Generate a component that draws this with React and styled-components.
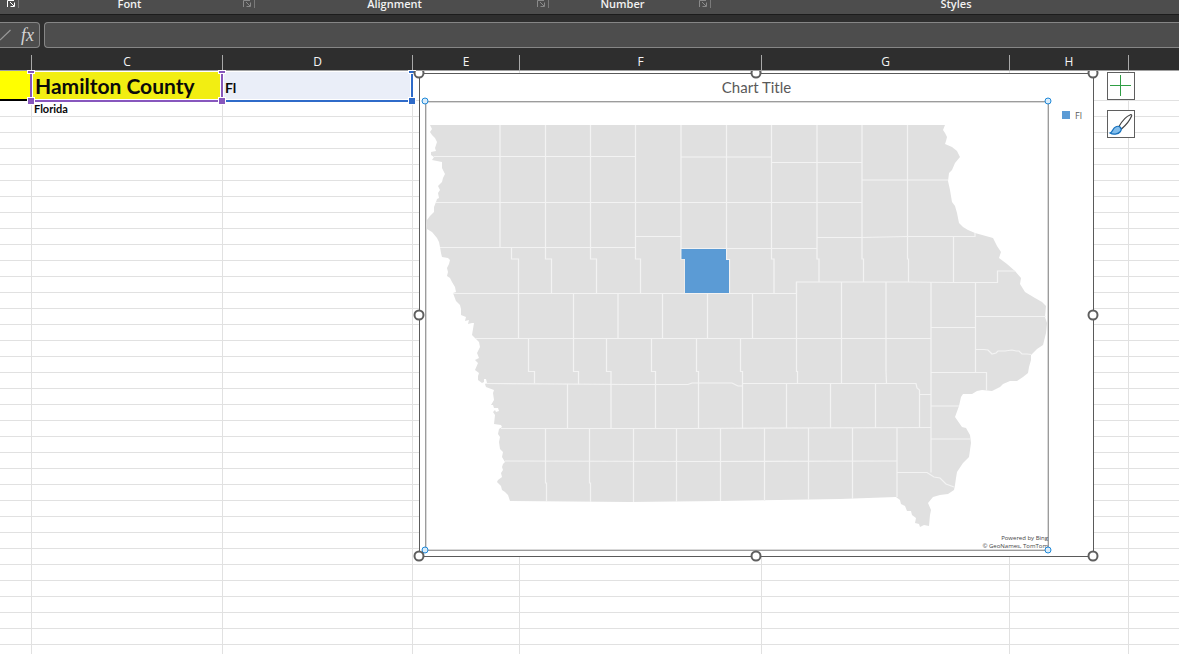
import React, { useState } from 'react';
import styled, { createGlobalStyle } from 'styled-components';

const GlobalStyle = createGlobalStyle`
  * {
    box-sizing: border-box;
  }

  body {
    margin: 0;
    background-color: #fff;
    font-family: "Open Sans", "Noto Sans", sans-serif;
  }
`;

const Window = styled.div`
  display: flex;
  flex-direction: column;
  height: 100vh;
  overflow: hidden;
  background-color: #2e2e2e;
`;

const Ribbon = styled.div`
  display: flex;
  flex: none;
  height: 15px;
  background-color: #4d4d4d;
  border-bottom: 1px solid #1c1c1c;
`;

const RibbonGroup = styled.div`
  display: flex;
  flex: none;
  width: ${props => props.$width}px;
  height: 8px;
  border-right: 1px solid #7a7a7a;
  line-height: 8px;
`;

const GroupName = styled.span`
  flex: 1;
  padding-right: 2px;
  text-align: center;
  font-size: 11px;
  font-weight: 600;
  color: #f2f2f2;
`;

const Launcher = styled.button`
  width: 12px;
  height: 8px;
  padding: 0;
  border: none;
  background: none;
  color: ${props => (props.$active ? '#fff' : '#8a8a8a')};
  line-height: 0;
`;

const FormulaBar = styled.div`
  display: flex;
  flex: none;
  gap: 4px;
  padding: 7px 0;
  height: 40px;
`;

const FormulaTools = styled.div`
  display: flex;
  align-items: center;
  justify-content: space-between;
  width: 40px;
  padding-right: 5px;
  background-color: #4d4d4d;
  border: 1px solid #868686;
  border-left: none;
  border-radius: 0 4px 4px 0;
`;

const ToolButton = styled.button`
  padding: 0;
  border: none;
  background: none;
  color: #d6d6d6;
  font: italic 18px/22px "Liberation Serif", serif;
`;

const FormulaInput = styled.input`
  flex: 1;
  min-width: 0;
  padding: 0 8px;
  background-color: #4d4d4d;
  border: 1px solid #868686;
  border-right: none;
  border-radius: 4px 0 0 4px;
  color: #fff;
  font-size: 12px;
  outline: none;
`;

const Sheet = styled.div`
  position: relative;
  flex: 1;
  min-height: 0;
  overflow: hidden;
  background-color: #fff;
`;

const Grid = styled.table`
  width: 100%;
  table-layout: fixed;
  border-collapse: separate;
  border-spacing: 0;
`;

const ColumnHeader = styled.th`
  height: 16px;
  padding: 0;
  background-color: #2e2e2e;
  border-right: 1px solid #a8a8a8;
  border-bottom: 1px solid #a0a0a0;
  color: #f5f5f5;
  font-size: 12px;
  font-weight: 400;
  line-height: 13px;
  text-align: center;
  vertical-align: top;

  &:last-child {
    border-right: none;
  }
`;

const Cell = styled.td`
  position: relative;
  height: ${props => (props.$tall ? 30 : 16)}px;
  padding: 0 2px;
  background-color: ${props => props.$fill || '#fff'};
  border-right: 1px solid #e1e1e1;
  border-bottom: ${props => (props.$underlined ? '2px solid #000' : '1px solid #e1e1e1')};
  color: #0a0a0a;
  font-family: Lato, "Open Sans", sans-serif;
  font-size: ${props => props.$size || 11}px;
  font-weight: 700;
  line-height: ${props => props.$line || 15}px;
  vertical-align: bottom;
  white-space: nowrap;

  &:last-child {
    border-right: none;
  }
`;

const NameCell = styled(Cell)`
  padding-left: 3px;
`;

const RangeOutline = styled.span`
  position: absolute;
  top: 0;
  right: -1px;
  bottom: -2px;
  left: ${props => (props.$open ? 0 : -2)}px;
  border: 2px solid ${props => props.$color};
  border-top: none;
  border-left-width: ${props => (props.$open ? 0 : 2)}px;
  box-shadow: inset 0 0 0 1px #fff;
`;

const RangeHandle = styled.span`
  position: absolute;
  ${props => props.$side}: -4px;
  ${props => (props.$top ? 'top: 0;' : 'bottom: -4px;')}
  width: 6px;
  height: ${props => (props.$top ? 2 : 6)}px;
  background-color: ${props => props.$color};
  box-shadow: 0 0 0 1px #fff;
`;

// floating objects start right under the column headers
const DrawingLayer = styled.div`
  position: absolute;
  inset: 16px 0 0 0;
  z-index: 3;
  display: flex;
  align-items: flex-start;
  gap: 13px;
  padding: 1px 0 0 419px;
  overflow: hidden;
  pointer-events: none;
`;

const Chart = styled.section`
  position: relative;
  display: flex;
  flex: none;
  flex-direction: column;
  width: 675px;
  margin-top: 1px;
  background-color: #fff;
  border: 1px solid #5a5a5a;
  pointer-events: auto;
`;

const ChartTitle = styled.h2`
  margin: 0;
  color: #595959;
  font-family: Lato, "Open Sans", sans-serif;
  font-size: 15px;
  font-weight: 400;
  line-height: 27px;
  text-align: center;
`;

const ChartBody = styled.div`
  display: flex;
  padding: 0 0 5px 5px;
`;

const Plot = styled.div`
  position: relative;
  flex: 1;
  border: 1px solid #9c9c9c;
  box-shadow: inset 0 0 0 1px #d9d9d9;
`;

const MapDrawing = styled.svg`
  display: block;
  width: 100%;
`;

const Credits = styled.p`
  position: absolute;
  right: 0;
  bottom: 0;
  margin: 0;
  color: #444;
  font-size: 6px;
  line-height: 8px;
  text-align: right;
`;

const Legend = styled.div`
  display: flex;
  align-items: center;
  gap: 5px;
  width: 44px;
  height: 28px;
  padding-left: 13px;
  color: #595959;
  font-size: 9px;
`;

const Swatch = styled.span`
  width: 8px;
  height: 8px;
  background-color: #5b9bd5;
`;

const HandleFrame = styled.div`
  position: absolute;
  inset: -1px 0 0 -1px;
  pointer-events: none;
`;

const SizeHandle = styled.span`
  position: absolute;
  left: ${props => props.$x};
  top: ${props => props.$y};
  width: ${props => (props.$inner ? 7 : 11)}px;
  height: ${props => (props.$inner ? 7 : 11)}px;
  background-color: ${props => (props.$inner ? '#d9ecfa' : '#fff')};
  border: ${props => (props.$inner ? '1px solid #1e88d8' : '2px solid #5f5f5f')};
  border-radius: 50%;
  transform: translate(-50%, -50%);
`;

const ChartTools = styled.div`
  display: flex;
  flex: none;
  flex-direction: column;
  gap: 10px;
  pointer-events: auto;
`;

const ChartTool = styled.button`
  width: 28px;
  height: 28px;
  padding: 0;
  background-color: #fff;
  border: 1px solid #5f5f5f;
  line-height: 0;
`;

const columns = [
  { name: '', width: 32 },
  { name: 'C', width: 191 },
  { name: 'D', width: 190 },
  { name: 'E', width: 107 },
  { name: 'F', width: 242 },
  { name: 'G', width: 248 },
  { name: 'H', width: 119 },
  { name: '' },
];

const groups = [
  { name: '', width: 19, active: true },
  { name: 'Font', width: 236 },
  { name: 'Alignment', width: 294 },
  { name: 'Number', width: 162 },
  { name: 'Styles', width: 493, plain: true },
];

const PURPLE = '#8757bd';
const BLUE = '#2f6bc9';

const stateOutline = `M430 125H945L943 130L945 133L947 137L946 141L945 144L952 147L957 151L960 157L955 163L952 170L949 173
  L948 181L950 190L952 202L955 206L957 213L959 223L963 227L968 230L975 233L993 238L997 246L1001 252L999 258L1007 264
  L1015 271L1021 278L1020 284L1025 292L1035 298L1042 302L1046 306L1045 317L1047 323L1046 333L1043 345L1037 349L1031 355
  L1031 360L1029 367L1028 373L1023 377L1017 381L1010 381L1003 384L1000 387L992 391L982 390L977 391L972 394L963 394
  L961 397L959 406L955 417L962 427L966 428L970 435L971 443L969 457L963 463L957 472L956 478L955 485L954 490L948 494
  L940 495L933 497L928 503L931 510L930 515L929 526L924 525L920 527L919 524L915 523L916 518L912 515L911 511L907 511L905 506
  L901 504L900 500L896 497L840 499L720 501L630 502L510 501L508 495L505 492L502 490L501 486L497 482L498 480L502 477L501 473
  L503 470L502 467L503 464L505 462L502 457L503 452L500 449L499 442L500 437L498 434L499 429L502 427L501 425L494 424L495 415
  L493 412L495 410L496 412L499 411L498 408L494 408L493 405L491 405L494 400L493 393L494 390L486 387L485 384L487 383L486 379
  L484 379L484 382L482 383L478 380L478 376L479 373L475 370L478 363L475 360L479 358L477 353L480 347L479 342L475 338L472 335
  L473 329L474 323L472 323L468 324L469 320L465 321L466 317L461 315L461 309L460 305L456 301L453 293L456 292L455 287L452 282
  L450 278L447 276L448 272L447 268L449 264L450 260L448 258L442 257L441 253L440 247L439 242L437 238L432 232L427 229L426 225
  L427 220L430 216L434 212L434 207L436 202L437 199L439 198L438 193L440 190L438 186L442 182L443 178L445 174L442 168
  L442 162L432 160L434 157L431 155L431 152L436 151L435 148L437 142L435 138L432 135L430 132L432 129Z`;

const countyLines = [
  'M434 156.5H635.5M681 157H771.5M771.5 162.5H862M436 202.5H862M862 180H948',
  'M440 247.5H635.5M635.5 236.5H681M681 248.5H817M817 237.5H862L907.5 236.5H975V233',
  'M453 293.5H796.5V282H907L953 282.5H997.5V271H1015',
  'M475 338.5H931M931 327.5H975.5M975.5 316.5H1046',
  'M975.5 349.5H984L988 350L992 354L996 353L998 351L1005 351L1012 350L1016 351L1019 351L1022 354L1027 354L1031 354.5',
  'M931 372.5H986.5V391M931 406H959M931 439H970',
  'M486 383.5L630 384.5H688L692 383L732 383L738 386H742.5M742.5 383.5H916L917 388L919.5 390V428M919.5 394.5H931',
  'M501 428.5H690L931 427.5M505 461L700 461.5L897 461M897 472.5H927L934 477L940 478L946 484L954 487',
  'M500 125V247.5M545.5 125V259H551.5V293.5M590.5 125V259H596.5V293.5M511.5 247.5V259H518.5V338.5',
  'M635.5 125V259H640.5V293.5M681 125V259H685V293.5M726.5 125V259.5H729.5V293.5M771.5 125V259H774V293.5',
  'M817 125V259H819V282M862 125V259H863.5V282M907.5 125V259H908.5V282M953.5 237V282.5',
  'M573.5 293.5V371.5H578.5V384M618 293.5V338.5M662.5 293.5V338.5M707.5 293.5V338.5M752.5 293.5V338.5',
  'M796.5 282V371.5H797.5V383.5M841.5 282V383.5M886 282V371L886.5 383.5M931 282V472.5M975.5 282V372.5',
  'M528.5 338.5V371.5H534.5V383.5M606.5 338.5V371.5H611V428.5M651.5 338.5V371.5H655.5V428.5',
  'M696.5 338.5V371.5H698.5V428.5M740.5 338.5V371.5H742.5V428.5',
  'M567.5 384V428.5M786.5 384V428M830.5 384V428M875.5 384V428',
  'M545.5 428.5V483H546.5V501M589.5 428.5V483H590.5V502M633.5 428.5V502M676.5 428.5V502M720.5 428V501',
  'M764.5 428V501M808.5 428V500M852.5 428V499M897 428V497',
];

const StateMap = () => (
  <MapDrawing viewBox="426 102 622 448" role="img" aria-label="Map of counties">
    <path d={stateOutline} fill="#e0e0e0" />
    {countyLines.map(line => (
      <path key={line} d={line} fill="none" stroke="#f3f3f3" strokeWidth="1.2" />
    ))}
    <path d="M681.5 249H726V260H729V293H685V259H681.5Z" fill="#5b9bd5" />
  </MapDrawing>
);

const LauncherIcon = () => (
  <svg width="10" height="8" viewBox="0 0 10 8" fill="none" stroke="currentColor">
    <path d="M0.5 7V0.5H7M3 2L7 6M7.5 2.5V6.5H3.5" />
  </svg>
);

const BrushIcon = () => (
  <svg width="26" height="26" viewBox="0 0 26 26">
    <path d="M11 15.5C14 10 19 5 22.5 3.7Q24 3.3 23.6 5C22 9 18 14 13.5 18Z" fill="#fff" stroke="#444" strokeWidth="1.2" />
    <path d="M2 22C4.5 21.5 4.5 17.5 7.5 16Q10 14.5 12 16Q14.3 18 12.5 20.5C10 23.5 5 24 2 22Z" fill="#83beec" stroke="#1771bd" strokeWidth="1.2" />
  </svg>
);

const outerHandles = [
  ['0%', '0%'], ['50%', '0%'], ['100%', '0%'],
  ['0%', '50%'], ['100%', '50%'],
  ['0%', '100%'], ['50%', '100%'], ['100%', '100%'],
];

const innerHandles = [['0%', '0%'], ['100%', '0%'], ['0%', '100%'], ['100%', '100%']];

const BlankCells = ({ count }) => Array.from({ length: count }, (_, i) => <Cell key={i} />);

const App = () => {
  const [formula, setFormula] = useState('');

  return (
    <Window>
      <GlobalStyle />
      <Ribbon>
        {groups.map(group => (
          <RibbonGroup key={group.name} $width={group.width}>
            <GroupName>{group.name}</GroupName>
            {!group.plain && (
              <Launcher $active={group.active} aria-label={`${group.name} settings`}>
                <LauncherIcon />
              </Launcher>
            )}
          </RibbonGroup>
        ))}
      </Ribbon>

      <FormulaBar>
        <FormulaTools>
          <ToolButton aria-label="Enter">
            <svg width="11" height="12" viewBox="0 0 11 12" fill="none" stroke="#999" strokeWidth="1.2">
              <path d="M0 11L10.5 1" />
            </svg>
          </ToolButton>
          <ToolButton aria-label="Insert function">fx</ToolButton>
        </FormulaTools>
        <FormulaInput
          aria-label="Formula"
          value={formula}
          onChange={e => setFormula(e.target.value)}
        />
      </FormulaBar>

      <Sheet>
        <Grid>
          <colgroup>
            {columns.map((column, i) => (
              <col key={i} width={column.width} />
            ))}
          </colgroup>
          <thead>
            <tr>
              {columns.map((column, i) => (
                <ColumnHeader key={i}>{column.name}</ColumnHeader>
              ))}
            </tr>
          </thead>
          <tbody>
            <tr>
              <Cell $tall $fill="#ffff00" $underlined />
              <NameCell $tall $fill="#f2ee12" $size={21} $line={29}>
                Hamilton County
                <RangeOutline $color={PURPLE} style={{ zIndex: 2 }}>
                  <RangeHandle $color={PURPLE} $side="left" $top />
                  <RangeHandle $color={PURPLE} $side="right" $top />
                  <RangeHandle $color={PURPLE} $side="left" />
                  <RangeHandle $color={PURPLE} $side="right" />
                </RangeOutline>
              </NameCell>
              <Cell $tall $fill="#eaeef8" $size={14} $line={24}>
                Fl
                <RangeOutline $color={BLUE} $open style={{ zIndex: 1 }}>
                  <RangeHandle $color={BLUE} $side="right" $top />
                  <RangeHandle $color={BLUE} $side="right" />
                </RangeOutline>
              </Cell>
              <BlankCells count={5} />
            </tr>
            <tr>
              <Cell />
              <Cell>Florida</Cell>
              <BlankCells count={6} />
            </tr>
            {Array.from({ length: 60 }, (_, i) => (
              <tr key={i}>
                <BlankCells count={8} />
              </tr>
            ))}
          </tbody>
        </Grid>

        <DrawingLayer>
          <Chart>
            <ChartTitle>Chart Title</ChartTitle>
            <ChartBody>
              <Plot>
                <StateMap />
                <Credits>
                  Powered by Bing
                  <br />© GeoNames, TomTom
                </Credits>
                <HandleFrame>
                  {innerHandles.map(([x, y]) => (
                    <SizeHandle key={x + y} $x={x} $y={y} $inner />
                  ))}
                </HandleFrame>
              </Plot>
              <Legend>
                <Swatch />
                Fl
              </Legend>
            </ChartBody>
            <HandleFrame>
              {outerHandles.map(([x, y]) => (
                <SizeHandle key={x + y} $x={x} $y={y} />
              ))}
            </HandleFrame>
          </Chart>
          <ChartTools>
            <ChartTool aria-label="Chart elements">
              <svg width="26" height="26" viewBox="0 0 26 26" stroke="#2f9e44" fill="none">
                <path d="M12.5 2V23M2 12.5H23" />
              </svg>
            </ChartTool>
            <ChartTool aria-label="Chart styles">
              <BrushIcon />
            </ChartTool>
          </ChartTools>
        </DrawingLayer>
      </Sheet>
    </Window>
  );
};

export default App;
